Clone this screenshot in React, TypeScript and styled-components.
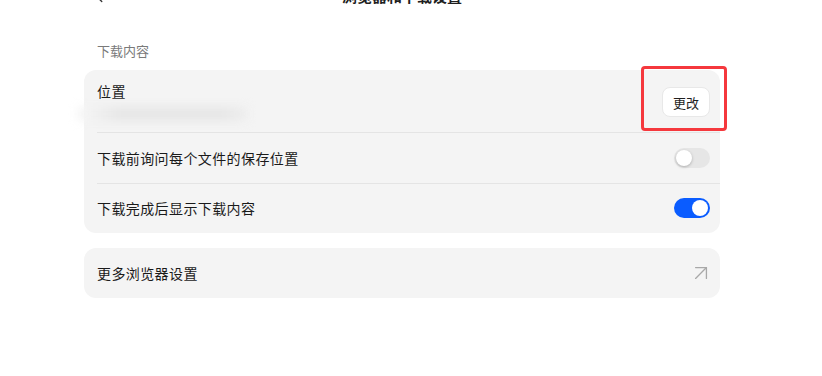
import React from 'react';
import styled, { createGlobalStyle } from 'styled-components';
import { ChevronLeft, ArrowUpRight } from 'lucide-react';

const GlobalStyle = createGlobalStyle`
  html, body {
    margin: 0;
    padding: 0;
    background: #ffffff;
    overflow: hidden;
  }
  body {
    font-family: "Noto Sans CJK SC", "Noto Sans", sans-serif;
    color: #1f1f1f;
  }
`;

const Page = styled.div`
  width: 636px;
  margin-left: 84px;
  display: flex;
  flex-direction: column;
`;

const Header = styled.div`
  height: 40px;
  margin-top: -24px;
  display: flex;
  align-items: center;
  justify-content: center;
  position: relative;
`;

const BackButton = styled.div`
  position: absolute;
  left: 4px;
  top: 9px;
  display: flex;
  color: #333;
`;

const Title = styled.div`
  font-size: 15px;
  font-weight: 700;
  line-height: 20px;
`;

const SectionLabel = styled.div`
  font-size: 13px;
  line-height: 18px;
  color: #7a7a7a;
  margin: 26px 0 10px 13px;
`;

const Card = styled.div<{ $gap?: number }>`
  background: #f4f4f4;
  border-radius: 12px;
  margin-top: ${(p) => p.$gap ?? 0}px;
  display: flex;
  flex-direction: column;
`;

const Row = styled.div<{ $h: number; $divider?: boolean }>`
  position: relative;
  height: ${(p) => p.$h}px;
  padding: 0 10px 0 13px;
  display: flex;
  align-items: center;
  justify-content: space-between;
  box-sizing: border-box;
  ${(p) =>
    p.$divider &&
    `&::before {
      content: '';
      position: absolute;
      left: 13px;
      right: 0;
      top: 0;
      height: 1px;
      background: #e4e4e4;
    }`}
`;

const RowText = styled.div`
  font-size: 14px;
  line-height: 20px;
  letter-spacing: 0.4px;
  color: #1a1a1a;
`;

const LocationInfo = styled.div`
  display: flex;
  flex-direction: column;
  gap: 6px;
  align-self: flex-start;
  padding-top: 11px;
`;

const BlurredPath = styled.div`
  width: 170px;
  height: 14px;
  margin-left: -20px;
  background: linear-gradient(90deg, #f7f7f7 0%, #e6e6e6 25%, #e6e6e6 85%, #ededed 100%);
  border-radius: 4px;
  filter: blur(5px);
`;

const ChangeButton = styled.button`
  width: 48px;
  height: 30px;
  margin-top: 2px;
  background: #ffffff;
  border: 1px solid #e8e8e8;
  border-radius: 8px;
  font-family: inherit;
  font-size: 13px;
  color: #1f1f1f;
  padding: 0;
`;

const Highlight = styled.div`
  position: absolute;
  left: 557px;
  right: -7px;
  top: -4px;
  bottom: 1px;
  border: 3px solid #f5383d;
  border-radius: 4px;
  pointer-events: none;
`;

const Toggle = styled.div<{ $on?: boolean }>`
  width: 36px;
  height: 20px;
  border-radius: 10px;
  background: ${(p) => (p.$on ? '#0a5cff' : '#e6e6e6')};
  position: relative;
  &::after {
    content: '';
    position: absolute;
    top: 2px;
    left: ${(p) => (p.$on ? '18px' : '2px')};
    width: 16px;
    height: 16px;
    border-radius: 50%;
    background: #ffffff;
    box-shadow: ${(p) => (p.$on ? 'none' : '0 1px 3px rgba(0,0,0,0.25)')};
  }
`;

const LinkIcon = styled.div`
  display: flex;
  color: #a8a8a8;
  margin-right: -4px;
`;

export default function App() {
  return (
    <>
      <GlobalStyle />
      <Page>
        <Header>
          <BackButton>
            <ChevronLeft size={22} strokeWidth={1.5} />
          </BackButton>
          <Title>浏览器和下载设置</Title>
        </Header>
        <SectionLabel>下载内容</SectionLabel>
        <Card>
          <Row $h={62}>
            <LocationInfo>
              <RowText>位置</RowText>
              <BlurredPath />
            </LocationInfo>
            <ChangeButton>更改</ChangeButton>
            <Highlight />
          </Row>
          <Row $h={51} $divider>
            <RowText>下载前询问每个文件的保存位置</RowText>
            <Toggle />
          </Row>
          <Row $h={50} $divider>
            <RowText>下载完成后显示下载内容</RowText>
            <Toggle $on />
          </Row>
        </Card>
        <Card $gap={15}>
          <Row $h={50}>
            <RowText>更多浏览器设置</RowText>
            <LinkIcon>
              <ArrowUpRight size={26} strokeWidth={1.2} />
            </LinkIcon>
          </Row>
        </Card>
      </Page>
    </>
  );
}
